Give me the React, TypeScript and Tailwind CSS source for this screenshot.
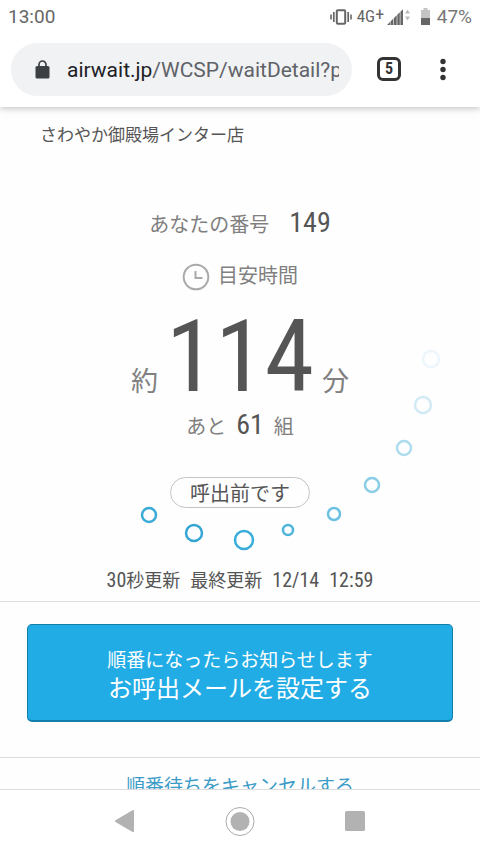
import React from "react";

const JP = "font-['Noto_Sans_CJK_JP',sans-serif]";
const NARROW = "font-['Roboto_Condensed','Noto_Sans_CJK_JP',sans-serif]";

const dots = [
  { x: 149, y: 515, r: 7, color: "#3aaad6" },
  { x: 194, y: 533, r: 8, color: "#35a6d3" },
  { x: 244, y: 540, r: 9, color: "#3aaedb" },
  { x: 288, y: 530, r: 5, color: "#4fb4dc" },
  { x: 334, y: 514, r: 6, color: "#6cc1e1" },
  { x: 372, y: 485, r: 7, color: "#8acde7" },
  { x: 404, y: 448, r: 7, color: "#addcee" },
  { x: 423, y: 405, r: 8, color: "#d2eaf5" },
  { x: 431, y: 359, r: 8, color: "#edf6fb" },
];

function StatusBar() {
  return (
    <div className="relative z-20 flex h-[34px] shrink-0 items-center bg-white px-2 text-[#666]">
      <span className="flex-1 text-[19px]">13:00</span>
      <svg width="22" height="16" viewBox="0 0 22 16" fill="none" stroke="#666" aria-hidden="true">
        <rect x="6.8" y="1.2" width="8.4" height="13.6" rx="1" strokeWidth="2" />
        <path d="M3.8 3v10M18.2 3v10" strokeWidth="1.7" />
        <path d="M1 5.5v5M21 5.5v5" strokeWidth="1.6" />
      </svg>
      <span className="ml-[5px] flex w-[30px] items-center font-['Roboto_Condensed'] text-[17px]">
        4G<span className="pb-[5px] text-[18px] leading-4">+</span>
      </span>
      <svg width="24" height="18" viewBox="0 0 24 18" fill="#666" aria-hidden="true">
        <path d="M0 17l3-3v3zM3.500 13.500l2.900-2.900v6.400H3.500zM7 10l2.700-2.700V17H7zM10.300 6.800l2.500-2.500V17h-2.500zM13.400 3.800l2.600-2.600V17h-2.600z" />
        <path d="M20.500 1.500l2.500 4h-5zM20.500 12.500l2.500-4h-5z" fill="#bbb" />
      </svg>
      <svg className="ml-[9px]" width="12" height="18" viewBox="0 0 12 18" aria-hidden="true">
        <path d="M3.500 0h4v2H10v8H1V2h2.500z" fill="#c4c4c4" />
        <path d="M1 10h9v7H1z" fill="#666" />
      </svg>
      <span className="ml-[5px] text-[19px] text-[#777]">47%</span>
    </div>
  );
}

function BrowserBar() {
  return (
    <header className="relative z-10 flex h-[73px] shrink-0 items-start bg-white pl-[11px] pt-[9px] shadow-[0_2px_6px_rgba(0,0,0,0.22)]">
      <div className="flex h-[53px] min-w-0 flex-1 items-center rounded-full bg-[#f1f2f4] pl-[24px] pr-[13px]">
        <svg className="shrink-0" width="15" height="19" viewBox="0 0 15 19" aria-hidden="true">
          <path d="M4 7.500V4.500a3.500 3.500 0 017 0v3" fill="none" stroke="#3c4043" strokeWidth="1.700" />
          <rect x="0.500" y="6" width="14" height="12.500" rx="1.600" fill="#3c4043" />
        </svg>
        <div className="ml-[17px] flex-1 overflow-hidden whitespace-nowrap pt-[2px] text-[21px] text-[#5f6368]">
          <span className="text-[#202124]">airwait.jp</span>/WCSP/waitDetail?p
        </div>
      </div>
      <button
        type="button"
        aria-label="タブ"
        className="ml-[25px] mt-[14px] flex h-6 w-6 items-center justify-center rounded-[6px] border-[3px] border-[#333] font-['Roboto_Condensed'] text-[16px] font-bold leading-4 text-[#333]"
      >
        5
      </button>
      <button type="button" aria-label="メニュー" className="ml-[32px] mr-[27px] mt-[15px]">
        <svg width="20" height="24" viewBox="0 0 20 24" fill="#333">
          <circle cx="10" cy="3.500" r="2.700" />
          <circle cx="10" cy="11.500" r="2.700" />
          <circle cx="10" cy="19.500" r="2.700" />
        </svg>
      </button>
    </header>
  );
}

function WaitStatus() {
  return (
    <section className="relative flex flex-col items-center border-b border-[#ddd] pb-[6px] text-[20px] text-[#808080]">
      <div className="pointer-events-none absolute inset-x-0 top-0 flex justify-center">
        <svg width="480" height="490" viewBox="0 107 480 490" fill="none" className="shrink-0" aria-hidden="true">
          {dots.map((d) => (
            <circle key={d.x} cx={d.x} cy={d.y} r={d.r} stroke={d.color} strokeWidth="2.500" />
          ))}
        </svg>
      </div>
      <h1 className="mt-3 h-[30px] w-full px-10 text-[17px] leading-[30px] text-[#555]">さわやか御殿場インター店</h1>
      <p className="mt-[58px] flex h-8 items-baseline leading-8">
        あなたの番号<span className={`ml-5 text-[28px] text-[#555] ${NARROW}`}>149</span>
      </p>
      <p className="mt-5 flex h-8 items-center gap-2 leading-8">
        <svg width="28" height="28" viewBox="0 0 28 28" fill="none" stroke="#aaa" className="mt-1" aria-hidden="true">
          <circle cx="14" cy="14" r="12.300" strokeWidth="2" />
          <path d="M13.500 8v7h7" strokeWidth="2" />
        </svg>
        目安時間
      </p>
      <p className="mt-5 flex h-[92px] items-baseline text-[27px] leading-[92px]">
        約<span className={`mx-2 text-[100px] text-[#555] ${NARROW}`}>114</span>分
      </p>
      <p className="mt-[6px] flex h-8 items-baseline leading-8">
        あと<span className={`mx-[10px] text-[28px] text-[#555] ${NARROW}`}>61</span>組
      </p>
      <p className="mt-9 h-[31px] rounded-full border border-[#c4c4c4] px-[19px] leading-[29px] text-[#555]">呼出前です</p>
      <p className="mt-[55px] flex h-8 items-baseline text-[18px] leading-8 text-[#555]">
        <span className={`text-[20px] ${NARROW}`}>30</span>秒更新
        <span className="ml-[10px]">最終更新</span>
        <span className={`ml-[10px] text-[20px] ${NARROW}`}>12/14</span>
        <span className={`ml-[10px] text-[20px] ${NARROW}`}>12:59</span>
      </p>
    </section>
  );
}

function NavBar() {
  return (
    <nav className="flex h-16 shrink-0 items-center justify-center gap-[85px] border-t border-[#ddd] bg-white">
      <button type="button" aria-label="戻る">
        <svg width="30" height="30" viewBox="0 0 30 30" fill="#b2b2b2">
          <path d="M5.500 13.200L22.500 3.300q1.500-.8 1.500.8v20q0 1.500-1.500.8L5.500 15q-1.300-.9 0-1.800z" />
        </svg>
      </button>
      <button type="button" aria-label="ホーム">
        <svg width="30" height="30" viewBox="0 0 30 30">
          <circle cx="15" cy="14.500" r="14" fill="none" stroke="#aaa" strokeWidth="1" />
          <circle cx="15" cy="14.500" r="9.500" fill="#b2b2b2" />
        </svg>
      </button>
      <button type="button" aria-label="履歴">
        <svg width="30" height="30" viewBox="0 0 30 30" fill="#b2b2b2">
          <rect x="5" y="4" width="20" height="20" rx="1.500" />
        </svg>
      </button>
    </nav>
  );
}

export default function App() {
  return (
    <div lang="ja" className="flex h-screen flex-col overflow-hidden bg-white font-['Roboto','Noto_Sans_CJK_JP',sans-serif]">
      <StatusBar />
      <BrowserBar />
      <main className={`min-h-0 flex-1 overflow-hidden bg-[#fefefe] ${JP}`}>
        <WaitStatus />
        <section className="border-b border-[#ddd] px-[27px] pb-[35px] pt-[22px]">
          <button
            type="button"
            className="flex h-[98px] w-full flex-col items-center justify-center rounded-[5px] border border-b-2 border-[#137ea8] bg-[#22ace5] text-white"
          >
            <span className="text-[19px] leading-[28px]">順番になったらお知らせします</span>
            <span className="text-[24px] leading-[28px]">お呼出メールを設定する</span>
          </button>
        </section>
        <p className="pt-3 text-center text-[19px] leading-[30px]">
          <a href="#cancel" className="text-[#3c9cc8]">順番待ちをキャンセルする</a>
        </p>
      </main>
      <NavBar />
    </div>
  );
}
